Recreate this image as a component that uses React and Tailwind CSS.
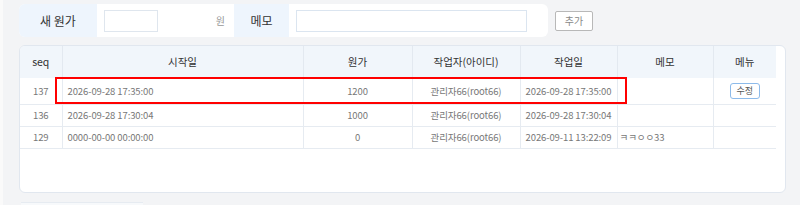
import React from 'react';

const rows = [
  { seq: 137, start: '2026-09-28 17:35:00', price: '1200', worker: '관리자66(root66)', date: '2026-09-28 17:35:00', memo: '', edit: true },
  { seq: 136, start: '2026-09-28 17:30:04', price: '1000', worker: '관리자66(root66)', date: '2026-09-28 17:30:04', memo: '' },
  { seq: 129, start: '0000-00-00 00:00:00', price: '0', worker: '관리자66(root66)', date: '2026-09-11 13:22:09', memo: 'ㅋㅋㅇㅇ33' },
];

const App = () => {
  return (
    <div
      className="w-[800px] h-[205px] overflow-hidden bg-[#f3f4f6] border-l-[3px] border-[#fafafa] text-[11px]"
      style={{ fontFamily: '"Noto Sans CJK KR", "Noto Sans", sans-serif' }}
    >
      <div className="pl-[16px] pt-[4px]">
        {/* Form */}
        <div className="flex items-center gap-[7px]">
          <div className="flex h-[33px] w-[529px] overflow-hidden rounded-[6px] bg-white">
            <div className="flex w-[78px] items-center justify-center bg-[#eef5fd] text-[12px] text-[#333]">새 원가</div>
            <div className="flex w-[137px] items-center pl-[7px] pr-[9px]">
              <div className="h-[22px] w-[54px] border border-[#dfe6ee] bg-white"></div>
              <span className="ml-auto text-[10px] text-[#999]">원</span>
            </div>
            <div className="flex w-[55px] items-center justify-center bg-[#eef5fd] text-[12px] text-[#333]">메모</div>
            <div className="flex flex-1 items-center pl-[7px]">
              <div className="h-[22px] w-[231px] border border-[#dbe5f0] bg-white"></div>
            </div>
          </div>
          <button className="h-[20px] w-[38px] rounded-[2px] border border-[#b8b8b8] bg-white text-[10px] text-[#888]">추가</button>
        </div>

        {/* Table card */}
        <div className="relative mt-[8px] h-[148px] w-[767px] overflow-hidden rounded-[6px] border border-[#e1e7ef] bg-white">
          <table className="w-[756px] table-fixed border-collapse text-center whitespace-nowrap">
            <colgroup>
              <col className="w-[42px]" />
              <col className="w-[241px]" />
              <col className="w-[109px]" />
              <col className="w-[108px]" />
              <col className="w-[97px]" />
              <col className="w-[96px]" />
              <col className="w-[63px]" />
            </colgroup>
            <thead>
              <tr className="h-[32px] bg-[#f1f6fb] text-[10.5px] text-[#333]">
                <th className="border-r border-[#e3e9f0] font-normal">seq</th>
                <th className="border-r border-[#e3e9f0] font-normal">시작일</th>
                <th className="border-r border-[#e3e9f0] font-normal">원가</th>
                <th className="border-r border-[#e3e9f0] font-normal">작업자(아이디)</th>
                <th className="border-r border-[#e3e9f0] font-normal">작업일</th>
                <th className="border-r border-[#e3e9f0] font-normal">메모</th>
                <th className="font-normal">메뉴</th>
              </tr>
            </thead>
            <tbody className="text-[9.5px] tracking-[-0.1px] text-[#777]">
              {rows.map((r) => (
                <tr key={r.seq} className={`${r.edit ? 'h-[26px]' : 'h-[22px]'} border-b border-[#e6ebf1]`}>
                  <td className="border-r border-[#e6ebf1]">{r.seq}</td>
                  <td className="border-r border-[#e6ebf1] pl-[5px] text-left">{r.start}</td>
                  <td className="border-r border-[#e6ebf1]">{r.price}</td>
                  <td className="border-r border-[#e6ebf1]">{r.worker}</td>
                  <td className="border-r border-[#e6ebf1]">{r.date}</td>
                  <td className="border-r border-[#e6ebf1] pl-[2px] text-left">{r.memo}</td>
                  <td>
                    {r.edit && (
                      <button className="h-[16px] w-[30px] rounded-[3px] border border-[#8dbbea] bg-white text-[9px] text-[#555]">수정</button>
                    )}
                  </td>
                </tr>
              ))}
            </tbody>
          </table>
          {/* highlight */}
          <div className="absolute left-[35px] top-[31px] h-[27px] w-[572px] border-[2px] border-[#f00]"></div>
        </div>

        <div className="mt-[9px] ml-[2px] h-[10px] w-[122px] border-t border-[#e6ebf1] bg-[#f7f9fb]"></div>
      </div>
    </div>
  );
};

export default App;
